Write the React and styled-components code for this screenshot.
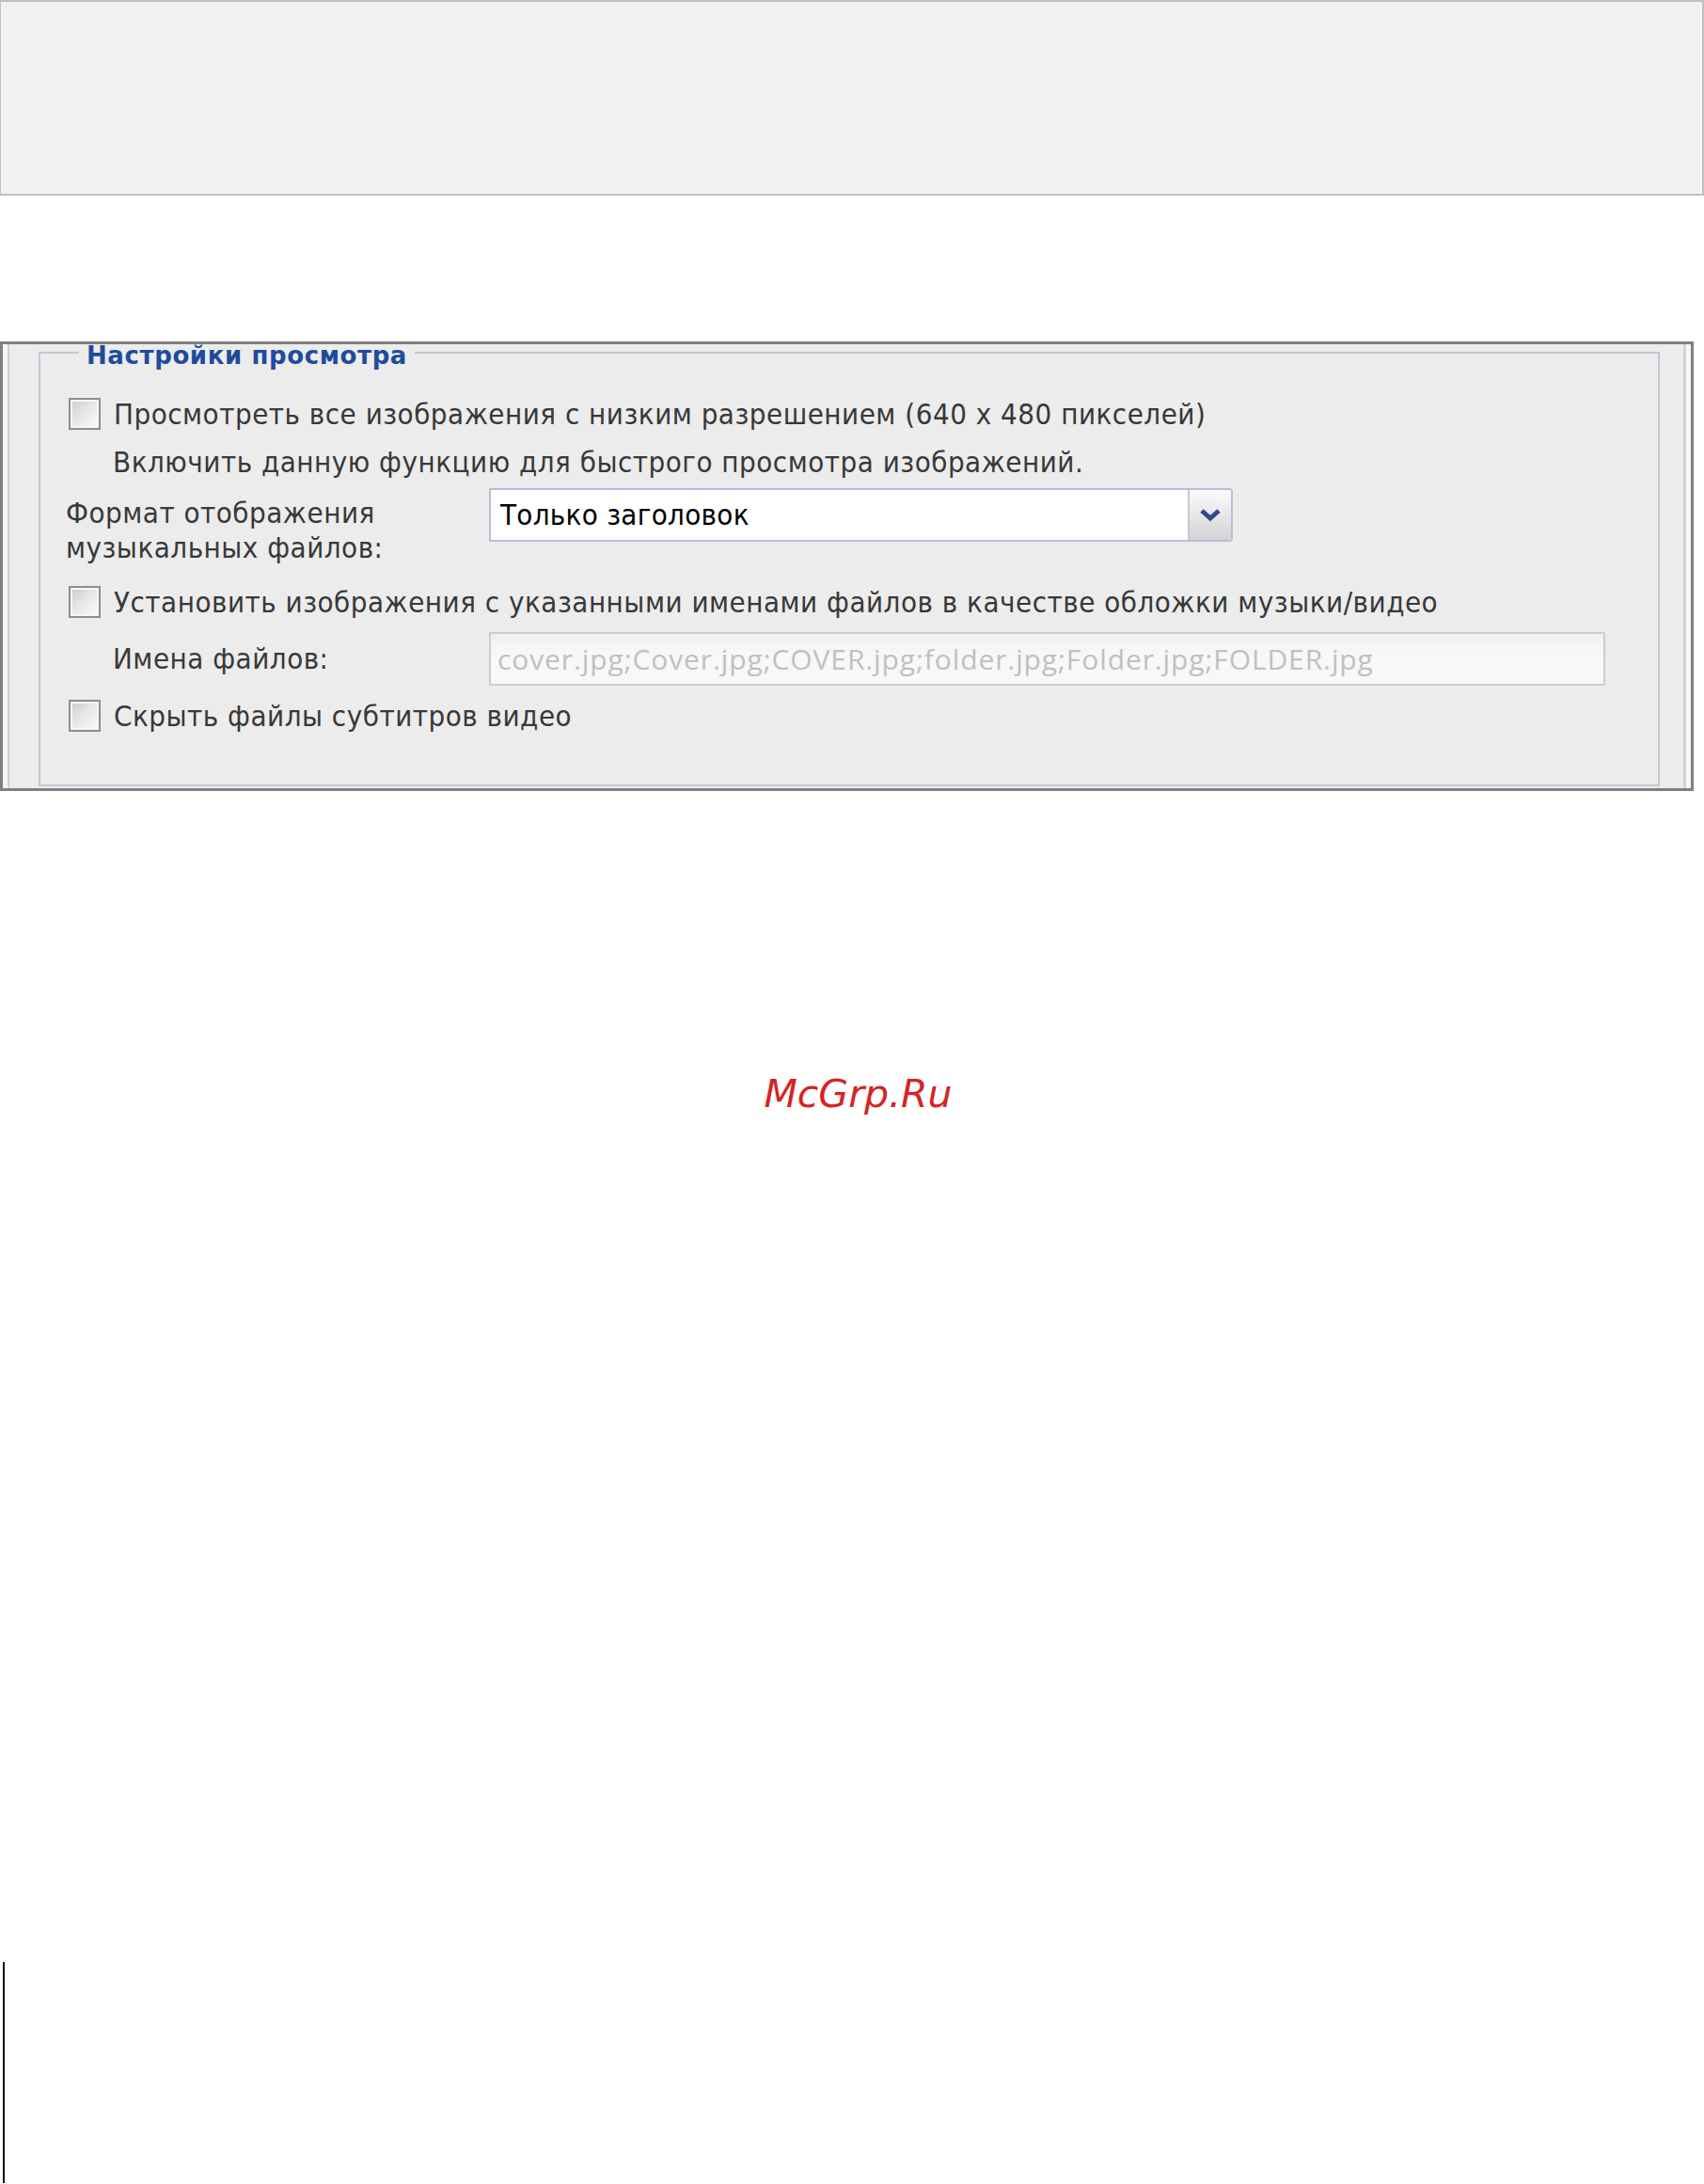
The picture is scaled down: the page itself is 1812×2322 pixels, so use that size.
import React from 'react';
import styled, { createGlobalStyle } from 'styled-components';

const GlobalStyle = createGlobalStyle`
  body {
    margin: 0;
    background: #ffffff;
    font-family: "DejaVu Sans Condensed", "DejaVu Sans", "Liberation Sans", sans-serif;
  }
`;

const Page = styled.div`
  width: 1812px;
  height: 2322px;
  overflow: hidden;
`;

const TopPanel = styled.div`
  box-sizing: border-box;
  width: 1812px;
  height: 208px;
  background: #f2f2f2;
  border: 2px solid #bfbfbf;
  border-left: 1px solid #c4c4c4;
`;

const SettingsPanel = styled.div`
  box-sizing: border-box;
  width: 1801px;
  height: 478px;
  margin-top: 155px;
  padding: 0 33px 0 38px;
  background: #ececec;
  border: 3px solid #808080;
  box-shadow: inset 5px 0 0 #f6f6f6, inset 7px 0 0 #cfcfcf,
    inset -5px 0 0 #f6f6f6, inset -8px 0 0 #d2d2d2;
`;

const Group = styled.fieldset`
  box-sizing: border-box;
  height: 474px;
  margin: -4px 0 0 0;
  padding: 32px 0 0 27px;
  border: 2px solid #c2c7d8;
  min-width: 0;
`;

const Legend = styled.legend`
  margin-left: 14px;
  padding: 6px 8px 0;
  font-family: "DejaVu Sans", sans-serif;
  font-size: 26px;
  line-height: 20px;
  font-weight: bold;
  letter-spacing: 0.6px;
  color: #1f4b9b;
`;

const Rows = styled.div`
  display: flex;
  flex-direction: column;
  color: #383838;
  font-size: 31px;
  letter-spacing: 0.5px;
`;

const CheckRow = styled.label`
  display: flex;
  align-items: center;
  gap: 14px;
  height: 40px;
  margin-top: ${p => p.$gap || 0}px;
  padding-left: 3px;
  white-space: nowrap;
`;

const Box = styled.span`
  box-sizing: border-box;
  flex: none;
  width: 34px;
  height: 34px;
  border: 2px solid #8d8d8d;
  box-shadow: inset 0 0 0 2px #f7f7f7;
  background: linear-gradient(135deg, #c9c9c9 0%, #e6e6e6 45%, #fbfbfb 100%);
`;

const Note = styled.div`
  height: 40px;
  line-height: 40px;
  margin-top: ${p => p.$gap || 0}px;
  padding-left: 50px;
  white-space: nowrap;
`;

const FieldRow = styled.div`
  display: grid;
  grid-template-columns: ${p => p.$labelWidth}px auto;
  align-items: ${p => (p.$top ? 'start' : 'center')};
  height: ${p => p.$height}px;
  margin-top: ${p => p.$gap || 0}px;
`;

const FieldLabel = styled.div`
  line-height: 37px;
  padding-left: ${p => p.$indent || 0}px;
  padding-top: ${p => p.$offset || 0}px;
  white-space: nowrap;
`;

const Select = styled.div`
  box-sizing: border-box;
  display: flex;
  width: 791px;
  height: 57px;
  border: 2px solid #b8bed4;
  border-radius: 0 4px 4px 0;
  background: #ffffff;
`;

const SelectValue = styled.div`
  flex: 1;
  padding-left: 10px;
  line-height: 53px;
  color: #000000;
  letter-spacing: 0.3px;
`;

const SelectButton = styled.div`
  display: flex;
  align-items: center;
  justify-content: center;
  width: 44px;
  border-left: 2px solid #c3c8d8;
  border-radius: 0 3px 3px 0;
  background: linear-gradient(#fbfbfb, #d3d3d3);
`;

const TextInput = styled.div`
  box-sizing: border-box;
  width: 1187px;
  height: 57px;
  padding-left: 7px;
  border: 2px solid #c9ccda;
  background: linear-gradient(#efefef, #f8f8f8 40%);
  font-family: "Open Sans", "Noto Sans", sans-serif;
  font-size: 30px;
  letter-spacing: 0.9px;
  line-height: 53px;
  color: #c0c0c0;
  white-space: nowrap;
  overflow: hidden;
`;

const Watermark = styled.div`
  height: 50px;
  margin-top: 297px;
  padding-left: 13px;
  text-align: center;
  font-family: "DejaVu Sans", sans-serif;
  font-style: italic;
  font-size: 41px;
  line-height: 50px;
  color: #d42424;
`;

const EdgeLine = styled.div`
  width: 2px;
  height: 235px;
  margin: 898px 0 0 3px;
  background: #111111;
`;

const Chevron = () => (
  <svg width="24" height="16" viewBox="0 0 24 16">
    <polyline points="3,3 12,11 21,3" fill="none" stroke="#2b4d8f" strokeWidth="5" />
  </svg>
);

const App = () => {
  return (
    <>
      <GlobalStyle />
      <Page>
        <TopPanel />
        <SettingsPanel>
          <Group>
            <Legend>Настройки просмотра</Legend>
            <Rows>
              <CheckRow>
                <Box />
                Просмотреть все изображения с низким разрешением (640 x 480 пикселей)
              </CheckRow>
              <Note $gap={11}>Включить данную функцию для быстрого просмотра изображений.</Note>
              <FieldRow $labelWidth={450} $height={83} $gap={8} $top>
                <FieldLabel $offset={8}>
                  Формат отображения
                  <br />
                  музыкальных файлов:
                </FieldLabel>
                <Select>
                  <SelectValue>Только заголовок</SelectValue>
                  <SelectButton>
                    <Chevron />
                  </SelectButton>
                </Select>
              </FieldRow>
              <CheckRow $gap={18}>
                <Box />
                Установить изображения с указанными именами файлов в качестве обложки музыки/видео
              </CheckRow>
              <FieldRow $labelWidth={450} $height={57} $gap={12}>
                <FieldLabel $indent={50}>Имена файлов:</FieldLabel>
                <TextInput>cover.jpg;Cover.jpg;COVER.jpg;folder.jpg;Folder.jpg;FOLDER.jpg</TextInput>
              </FieldRow>
              <CheckRow $gap={12}>
                <Box />
                Скрыть файлы субтитров видео
              </CheckRow>
            </Rows>
          </Group>
        </SettingsPanel>
        <Watermark>McGrp.Ru</Watermark>
        <EdgeLine />
      </Page>
    </>
  );
};

export default App;
